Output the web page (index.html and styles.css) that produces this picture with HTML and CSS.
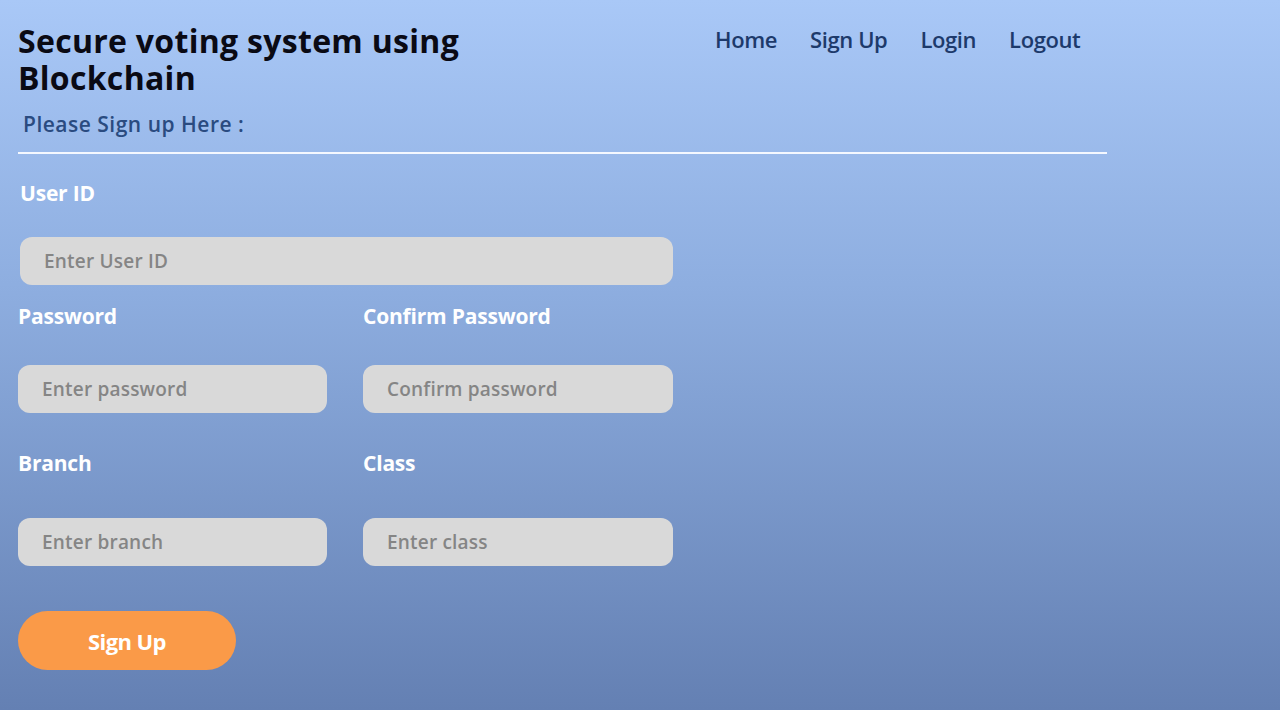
FILE: index.html
```html
<!DOCTYPE html>
<html lang="en">
<head>
<meta charset="utf-8">
<title>Secure voting system using Blockchain</title>
<link rel="stylesheet" href="styles.css">
</head>
<body>
<div class="page">
  <header class="top">
    <h1 class="brand">Secure voting system using<br>Blockchain</h1>
    <nav class="nav">
      <a href="#">Home</a>
      <a href="#">Sign Up</a>
      <a href="#">Login</a>
      <a href="#">Logout</a>
    </nav>
  </header>
  <p class="sub">Please Sign up Here :</p>
  <hr class="rule">
  <form class="form">
    <div class="field full">
      <label class="lbl">User ID</label>
      <input class="inp" type="text" placeholder="Enter User ID">
    </div>
    <div class="row">
      <div class="field">
        <label class="lbl">Password</label>
        <input class="inp" type="password" placeholder="Enter password">
      </div>
      <div class="field">
        <label class="lbl">Confirm Password</label>
        <input class="inp" type="password" placeholder="Confirm password">
      </div>
    </div>
    <div class="row">
      <div class="field">
        <label class="lbl">Branch</label>
        <input class="inp" type="text" placeholder="Enter branch">
      </div>
      <div class="field">
        <label class="lbl">Class</label>
        <input class="inp" type="text" placeholder="Enter class">
      </div>
    </div>
    <button class="btn" type="button">Sign Up</button>
  </form>
</div>
</body>
</html>
```

FILE: styles.css
```css
html, body {
  margin: 0;
  padding: 0;
  height: 100%;
}
body {
  background: linear-gradient(to bottom, #a9c8f7 0%, #8eaee0 40%, #6480b3 100%);
  font-family: "Open Sans", "Lato", sans-serif;
  min-height: 710px;
}
.page {
  padding: 22px 0 0 18px;
  width: 1089px;
}
.top {
  display: flex;
  align-items: flex-start;
}
.brand {
  margin: 0;
  width: 697px;
  font-size: 32px;
  line-height: 37px;
  font-weight: 700;
  color: #0a0a14;
  letter-spacing: 0.3px;
}
.nav {
  display: flex;
  gap: 33px;
  padding-top: 2px;
}
.nav a {
  font-size: 22px;
  font-weight: 600;
  color: #1d3a6b;
  text-decoration: none;
  letter-spacing: -0.4px;
}
.sub {
  margin: 14px 0 0 5px;
  font-size: 21px;
  font-weight: 600;
  color: #2a4b80;
  letter-spacing: 0.5px;
}
.rule {
  margin: 14px 0 0 0;
  border: none;
  height: 2px;
  background: #f4f8ff;
}
.form {
  width: 655px;
  display: flex;
  flex-direction: column;
}
.field {
  display: flex;
  flex-direction: column;
}
.full {
  padding-left: 2px;
  margin-top: 26px;
}
.lbl {
  font-size: 21px;
  font-weight: 700;
  color: #ffffff;
  letter-spacing: -0.2px;
  line-height: 26px;
}
.full .inp {
  margin-top: 31px;
}
.row {
  display: grid;
  grid-template-columns: 309px 310px;
  column-gap: 36px;
  margin-top: 18px;
}
.row + .row {
  margin-top: 37px;
}
.row .inp {
  margin-top: 36px;
}
.row + .row .inp {
  margin-top: 42px;
}
.inp {
  box-sizing: border-box;
  height: 48px;
  width: 100%;
  border: none;
  border-radius: 12px;
  background: #d9d9d9;
  padding: 0 24px;
  font-family: "Open Sans", sans-serif;
  font-size: 19px;
  outline: none;
}
.inp::placeholder {
  color: #858585;
  font-weight: 600;
  letter-spacing: 0.2px;
}
.btn {
  margin-top: 45px;
  width: 218px;
  height: 59px;
  border: none;
  border-radius: 30px;
  background: #fa9a48;
  color: #ffffff;
  font-family: "Open Sans", sans-serif;
  font-size: 22px;
  font-weight: 700;
  letter-spacing: -0.6px;
  cursor: pointer;
}
```
